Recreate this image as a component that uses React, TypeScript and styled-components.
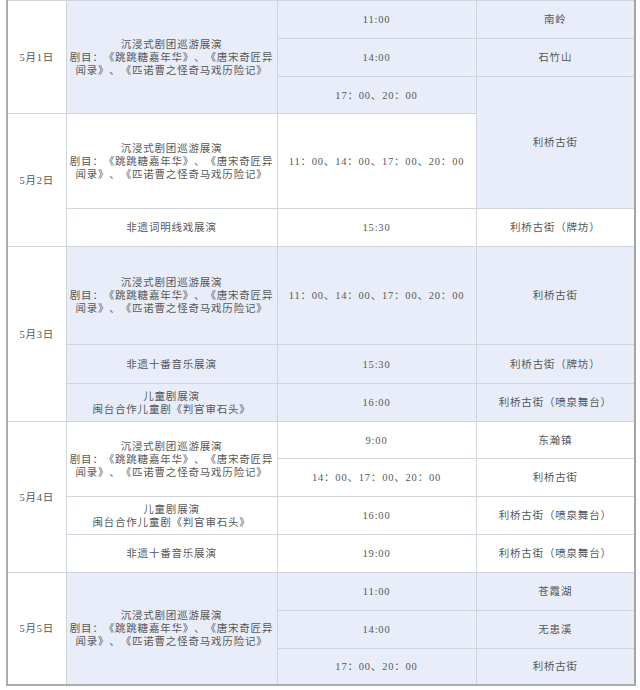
import React from 'react';
import styled, { createGlobalStyle } from 'styled-components';

const GlobalStyle = createGlobalStyle`
    html, body {
        margin: 0;
        padding: 0;
        background: #fff;
    }
`;

const PageBox = styled.div`
    width: 640px;
    height: 690px;
    overflow: hidden;
    padding: 0 6px;
    box-sizing: border-box;
`;

const ScheduleTable = styled.table`
    width: 628px;
    table-layout: fixed;
    border-collapse: collapse;
    font-family: 'Liberation Serif', 'Noto Sans CJK SC', serif;
    font-size: 10.5px;
    letter-spacing: 0.8px;
    color: #575757;
    text-spacing-trim: space-all;
    border-left: 2px solid #a9abaf;
    border-right: 2px solid #a2a4a8;
    border-bottom: 2px solid #a9abaf;
`;

const Row = styled.tr<{ $h: number }>`
    height: ${p => p.$h}px;
`;

const Cell = styled.td<{ $blue?: boolean }>`
    padding: 0 1px;
    text-align: center;
    vertical-align: middle;
    line-height: 13px;
    border: 1px solid #cfd4dd;
    background: ${p => (p.$blue ? '#e8edf9' : '#fff')};
`;

const DateCell = styled(Cell)`
    background: #fff;
`;

const PLAY = (
    <>
        沉浸式剧团巡游展演
        <br />
        剧目：《跳跳糖嘉年华》、《唐宋奇匠异
        <br />
        闻录》、《匹诺曹之怪奇马戏历险记》
    </>
);

const KIDS = (
    <>
        儿童剧展演
        <br />
        闽台合作儿童剧《判官审石头》
    </>
);

const ALL_DAY = '11：00、14：00、17：00、20：00';

const App = () => {
    return (
        <PageBox>
            <GlobalStyle />
            <ScheduleTable>
                <colgroup>
                    <col style={{ width: 59 }} />
                    <col style={{ width: 211 }} />
                    <col style={{ width: 199 }} />
                    <col style={{ width: 159 }} />
                </colgroup>
                <tbody>
                    {/* 5月1日 */}
                    <Row $h={38}>
                        <DateCell rowSpan={3}>5月1日</DateCell>
                        <Cell $blue rowSpan={3}>
                            {PLAY}
                        </Cell>
                        <Cell $blue>11:00</Cell>
                        <Cell $blue>南岭</Cell>
                    </Row>
                    <Row $h={38}>
                        <Cell $blue>14:00</Cell>
                        <Cell $blue>石竹山</Cell>
                    </Row>
                    <Row $h={37}>
                        <Cell $blue>17：00、20：00</Cell>
                        <Cell $blue rowSpan={2}>
                            利桥古街
                        </Cell>
                    </Row>

                    {/* 5月2日 */}
                    <Row $h={95}>
                        <DateCell rowSpan={2}>5月2日</DateCell>
                        <Cell>{PLAY}</Cell>
                        <Cell>{ALL_DAY}</Cell>
                    </Row>
                    <Row $h={38}>
                        <Cell>非遗词明线戏展演</Cell>
                        <Cell>15:30</Cell>
                        <Cell>利桥古街（牌坊）</Cell>
                    </Row>

                    {/* 5月3日 */}
                    <Row $h={98}>
                        <DateCell rowSpan={3}>5月3日</DateCell>
                        <Cell $blue>{PLAY}</Cell>
                        <Cell $blue>{ALL_DAY}</Cell>
                        <Cell $blue>利桥古街</Cell>
                    </Row>
                    <Row $h={39}>
                        <Cell $blue>非遗十番音乐展演</Cell>
                        <Cell $blue>15:30</Cell>
                        <Cell $blue>利桥古街（牌坊）</Cell>
                    </Row>
                    <Row $h={38}>
                        <Cell $blue>{KIDS}</Cell>
                        <Cell $blue>16:00</Cell>
                        <Cell $blue>利桥古街（喷泉舞台）</Cell>
                    </Row>

                    {/* 5月4日 */}
                    <Row $h={37}>
                        <DateCell rowSpan={4}>5月4日</DateCell>
                        <Cell rowSpan={2}>{PLAY}</Cell>
                        <Cell>9:00</Cell>
                        <Cell>东瀚镇</Cell>
                    </Row>
                    <Row $h={38}>
                        <Cell>14：00、17：00、20：00</Cell>
                        <Cell>利桥古街</Cell>
                    </Row>
                    <Row $h={38}>
                        <Cell>{KIDS}</Cell>
                        <Cell>16:00</Cell>
                        <Cell>利桥古街（喷泉舞台）</Cell>
                    </Row>
                    <Row $h={38}>
                        <Cell>非遗十番音乐展演</Cell>
                        <Cell>19:00</Cell>
                        <Cell>利桥古街（喷泉舞台）</Cell>
                    </Row>

                    {/* 5月5日 */}
                    <Row $h={38}>
                        <DateCell rowSpan={3}>5月5日</DateCell>
                        <Cell $blue rowSpan={3}>
                            {PLAY}
                        </Cell>
                        <Cell $blue>11:00</Cell>
                        <Cell $blue>苍霞湖</Cell>
                    </Row>
                    <Row $h={38}>
                        <Cell $blue>14:00</Cell>
                        <Cell $blue>无患溪</Cell>
                    </Row>
                    <Row $h={36}>
                        <Cell $blue>17：00、20：00</Cell>
                        <Cell $blue>利桥古街</Cell>
                    </Row>
                </tbody>
            </ScheduleTable>
        </PageBox>
    );
};

export default App;
